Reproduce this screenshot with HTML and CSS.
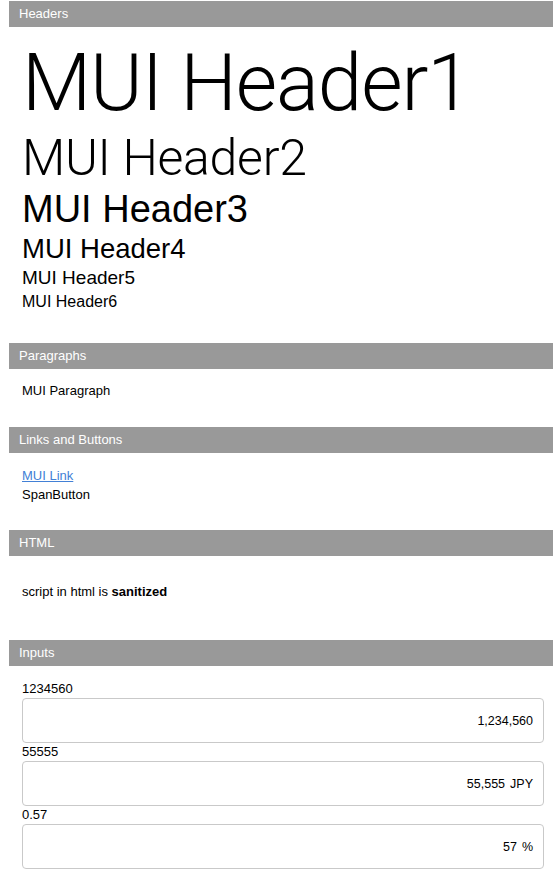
FILE: index.html
```html
<!DOCTYPE html>
<html lang="en">
<head>
<meta charset="utf-8">
<title>MUI sample</title>
<link rel="stylesheet" href="styles.css">
</head>
<body>
<div class="page">
  <section class="section">
    <div class="bar">Headers</div>
    <div class="content headers">
      <h1 class="h1">MUI Header1</h1>
      <h2 class="h2">MUI Header2</h2>
      <h3 class="h3">MUI Header3</h3>
      <h4 class="h4">MUI Header4</h4>
      <h5 class="h5">MUI Header5</h5>
      <h6 class="h6">MUI Header6</h6>
    </div>
  </section>
  <section class="section">
    <div class="bar">Paragraphs</div>
    <div class="content paragraphs">
      <p class="para">MUI Paragraph</p>
    </div>
  </section>
  <section class="section">
    <div class="bar">Links and Buttons</div>
    <div class="content links">
      <a class="link" href="#">MUI Link</a>
      <span class="span-button">SpanButton</span>
    </div>
  </section>
  <section class="section">
    <div class="bar">HTML</div>
    <div class="content html">
      <p class="html-text">script in html is <b>sanitized</b></p>
    </div>
  </section>
  <section class="section">
    <div class="bar">Inputs</div>
    <div class="content inputs">
      <div class="field">
        <div class="label">1234560</div>
        <div class="box"><span class="value">1,234,560</span></div>
      </div>
      <div class="field">
        <div class="label">55555</div>
        <div class="box"><span class="value">55,555</span><span class="suffix">JPY</span></div>
      </div>
      <div class="field">
        <div class="label">0.57</div>
        <div class="box"><span class="value">57</span><span class="suffix">%</span></div>
      </div>
    </div>
  </section>
</div>
</body>
</html>
```
FILE: styles.css
```css
html, body {
  margin: 0;
  padding: 0;
  background: #ffffff;
}
body {
  font-family: "Liberation Sans", Arial, Helvetica, sans-serif;
  color: #000;
  font-size: 13px;
  overflow: hidden;
}
.page {
  padding: 1px 0 0 9px;
}
.bar {
  background: #999999;
  color: #ffffff;
  height: 26px;
  line-height: 26px;
  font-size: 13px;
  padding-left: 10px;
}
.content {
  padding: 14px 9px 27px 13px;
}
.headers {
  padding-top: 10px;
  padding-bottom: 29px;
}
.headers h1, .headers h2, .headers h3, .headers h4, .headers h5, .headers h6 {
  margin: 0;
  font-weight: 400;
  white-space: nowrap;
}
.headers .h1 {
  font-family: Roboto, "Liberation Sans", sans-serif;
  font-weight: 300;
  font-size: 80px;
  line-height: 92px;
  letter-spacing: -1.1px;
}
.headers .h2 {
  font-family: Roboto, "Liberation Sans", sans-serif;
  font-weight: 300;
  font-size: 50px;
  line-height: 58px;
  letter-spacing: -0.3px;
}
.h3 {
  font-size: 38px;
  line-height: 44px;
}
.h4 {
  font-size: 27.5px;
  line-height: 35px;
}
.h5 {
  font-size: 19px;
  line-height: 23px;
}
.h6 {
  font-size: 16px;
  line-height: 25px;
}
.paragraphs {
  padding-bottom: 28px;
}
.para {
  margin: 0;
  line-height: 16px;
}
.links {
  display: flex;
  flex-direction: column;
  align-items: flex-start;
  line-height: 19px;
  padding-top: 13px;
  padding-bottom: 26px;
}
.link {
  color: #4280d6;
  text-decoration: underline;
}
.html {
  padding-bottom: 26px;
}
.html-text {
  margin: 14px 0;
  line-height: 16px;
}
.inputs {
  padding-top: 14px;
  padding-bottom: 0;
}
.label {
  line-height: 17px;
}
.box {
  margin: 1px 0 0;
  height: 45px;
  box-sizing: border-box;
  border: 1px solid #c9c9c9;
  border-radius: 4px;
  display: flex;
  justify-content: flex-end;
  align-items: center;
  gap: 5px;
  padding-right: 10px;
  font-size: 12.5px;
}
```
